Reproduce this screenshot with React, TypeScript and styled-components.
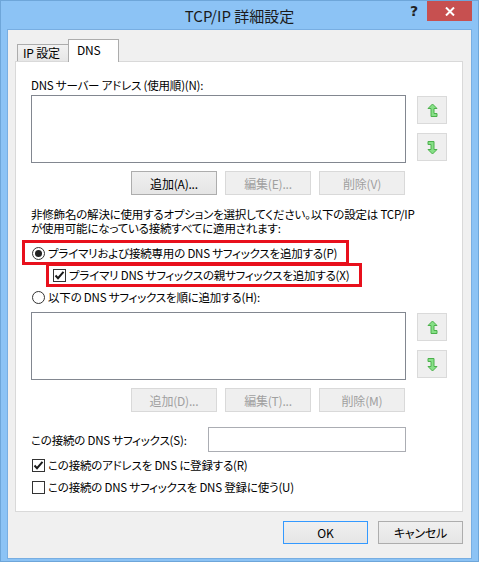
import React from 'react';
import styled, { createGlobalStyle } from 'styled-components';

const GlobalStyle = createGlobalStyle`
  html, body {
    margin: 0;
    padding: 0;
  }
  body {
    font-family: "Noto Sans CJK JP", "Noto Sans", sans-serif;
    font-size: 11.5px;
    letter-spacing: -0.2px;
    color: #000;
    font-feature-settings: "palt";
  }
`;

const Window = styled.div`
  width: 479px;
  height: 562px;
  box-sizing: border-box;
  border: 1px solid #6ea6d9;
  background: #8cc3f5;
  display: flex;
  flex-direction: column;
`;

const TitleBar = styled.div`
  height: 29px;
  display: grid;
  grid-template-columns: 1fr auto 1fr;
  align-items: start;
`;

const Title = styled.div`
  grid-column: 2;
  font-size: 15px;
  letter-spacing: 0;
  line-height: 29px;
  color: #1b1b1b;
  font-feature-settings: normal;
`;

const Caption = styled.div`
  grid-column: 3;
  justify-self: end;
  display: flex;
  margin-right: 6px;
`;

const HelpButton = styled.div`
  width: 26px;
  height: 20px;
  font-family: "DejaVu Sans", sans-serif;
  font-weight: bold;
  font-size: 14px;
  line-height: 20px;
  text-align: center;
  color: #222;
`;

const CloseButton = styled.div`
  width: 45px;
  height: 20px;
  background: #c75050;
  display: flex;
  align-items: center;
  justify-content: center;
`;

const Client = styled.div`
  flex: 1;
  margin: 0 7px 3px;
  background: #f0f0f0;
  box-shadow: 0 0 0 1px #78aee2;
  padding: 9px 8px 0 7px;
  display: flex;
  flex-direction: column;
`;

const TabStrip = styled.div`
  height: 23px;
  margin: 0 0 -1px 2px;
  display: flex;
  align-items: flex-end;
  position: relative;
  z-index: 1;
`;

const Tab = styled.div<{ $active?: boolean }>`
  box-sizing: border-box;
  width: 51px;
  height: ${(p) => (p.$active ? '23px' : '17px')};
  margin-bottom: ${(p) => (p.$active ? '0' : '1px')};
  padding: ${(p) => (p.$active ? '0 0 3px 8px' : '0 0 0 5px')};
  border: 1px solid #acacac;
  border-bottom: none;
  border-right: ${(p) => (p.$active ? '1px solid #acacac' : 'none')};
  background: ${(p) => (p.$active ? '#fff' : 'linear-gradient(#f2f2f2, #e6e6e6)')};
  display: flex;
  align-items: center;
  line-height: 14px;
  font-size: 12px;
`;

const Panel = styled.div`
  flex: 1;
  background: #fff;
  border: 1px solid #d9d9d9;
  padding: 16px 15px 0 15px;
  display: flex;
  flex-direction: column;
`;

const FieldLabel = styled.div`
  line-height: 14px;
  margin-bottom: 3px;
  white-space: nowrap;
`;

const ListRow = styled.div<{ $gap?: number }>`
  display: flex;
  gap: 11px;
  margin-top: ${(p) => p.$gap || 0}px;
`;

const ListBox = styled.div`
  width: 375px;
  height: 68px;
  box-sizing: border-box;
  border: 1px solid #828790;
  background: #fff;
`;

const ArrowColumn = styled.div`
  display: flex;
  flex-direction: column;
  gap: 9px;
  padding-top: 1px;
`;

const ArrowButton = styled.div`
  width: 30px;
  height: 28px;
  box-sizing: border-box;
  border: 1px solid #dadada;
  background: #efefef;
  display: flex;
  align-items: center;
  justify-content: center;
`;

const ButtonRow = styled.div`
  width: 375px;
  display: flex;
  justify-content: flex-end;
  gap: 8px;
  padding-right: 1px;
  box-sizing: border-box;
  margin-top: 8px;
`;

const PushButton = styled.div<{ $disabled?: boolean; $default?: boolean }>`
  width: 86px;
  height: 24px;
  box-sizing: border-box;
  border: 1px solid
    ${(p) => (p.$default ? '#3399ff' : p.$disabled ? '#d9d9d9' : '#adadad')};
  background: ${(p) =>
    p.$disabled ? '#efefef' : 'linear-gradient(#f0f0f0, #e5e5e5)'};
  color: ${(p) => (p.$disabled ? '#a0a0a0' : '#000')};
  display: flex;
  align-items: center;
  justify-content: center;
  white-space: nowrap;
  font-size: 12px;
`;

const Description = styled.div`
  margin-top: 12px;
  line-height: 14px;
  white-space: nowrap;
`;

const OptionGroup = styled.div`
  margin-top: 7px;
  display: flex;
  flex-direction: column;
`;

const OptionRow = styled.label<{ $indent?: number; $mark?: string }>`
  position: relative;
  width: fit-content;
  height: 22px;
  margin-left: ${(p) => p.$indent || 0}px;
  display: flex;
  align-items: center;
  gap: 3px;
  white-space: nowrap;

  &::after {
    content: '';
    display: ${(p) => (p.$mark ? 'block' : 'none')};
    position: absolute;
    inset: ${(p) => p.$mark || '0'};
    border: 3px solid #e8101c;
    pointer-events: none;
  }
`;

const Radio = styled.span<{ $checked?: boolean }>`
  width: 13px;
  height: 13px;
  margin-left: 1px;
  box-sizing: border-box;
  border: 1px solid #333;
  border-radius: 50%;
  background: #fff;
  display: flex;
  align-items: center;
  justify-content: center;

  &::before {
    content: '';
    width: 7px;
    height: 7px;
    border-radius: 50%;
    background: ${(p) => (p.$checked ? '#222' : 'transparent')};
  }
`;

const Box = styled.span`
  width: 13px;
  height: 13px;
  margin-left: 1px;
  box-sizing: border-box;
  border: 1px solid #333;
  background: #fff;
  display: flex;
  align-items: center;
  justify-content: center;
`;

const SuffixRow = styled.div`
  margin-top: 15px;
  display: flex;
  align-items: center;
`;

const SuffixLabel = styled.div`
  width: 177px;
  white-space: nowrap;
`;

const TextInput = styled.div`
  width: 198px;
  height: 25px;
  box-sizing: border-box;
  border: 1px solid #abadb3;
  background: #fff;
`;

const CheckGroup = styled.div`
  margin-top: 2px;
  display: flex;
  flex-direction: column;
`;

const Footer = styled.div`
  display: flex;
  justify-content: flex-end;
  gap: 10px;
  padding: 9px 0 14px;
`;

const FooterButton = styled(PushButton)`
  width: 85px;
  height: 23px;
`;

const UpIcon = () => (
  <svg width="11" height="15" viewBox="0 0 11 15">
    <path
      d="M5.5 1 L10 5.5 L7 5.5 L7 10.5 L10 10.5 L10 13.5 L4 13.5 L4 5.5 L1 5.5 Z"
      fill="#86e086"
      stroke="#4cb04c"
      strokeWidth="1"
    />
  </svg>
);

const DownIcon = () => (
  <svg width="11" height="15" viewBox="0 0 11 15">
    <path
      d="M1 1.5 L7 1.5 L7 9.5 L10 9.5 L5.5 14 L1 9.5 L4 9.5 L4 4.5 L1 4.5 Z"
      fill="#86e086"
      stroke="#4cb04c"
      strokeWidth="1"
    />
  </svg>
);

const Check: React.FC<{ checked?: boolean }> = ({ checked }) => (
  <Box>
    {checked && (
      <svg width="11" height="11" viewBox="0 0 11 11">
        <path d="M1.5 5.5 L4 8.2 L9.5 1.8" fill="none" stroke="#1a1a1a" strokeWidth="2" />
      </svg>
    )}
  </Box>
);

const ListWithArrows: React.FC<{ gap?: number }> = ({ gap }) => (
  <ListRow $gap={gap}>
    <ListBox />
    <ArrowColumn>
      <ArrowButton>
        <UpIcon />
      </ArrowButton>
      <ArrowButton>
        <DownIcon />
      </ArrowButton>
    </ArrowColumn>
  </ListRow>
);

const App: React.FC = () => {
  return (
    <>
      <GlobalStyle />
      <Window>
        <TitleBar>
          <Title>TCP/IP 詳細設定</Title>
          <Caption>
            <HelpButton>?</HelpButton>
            <CloseButton>
              <svg width="10" height="9" viewBox="0 0 10 9">
                <path d="M1 0.5 L9 8.5 M9 0.5 L1 8.5" stroke="#fff" strokeWidth="2" />
              </svg>
            </CloseButton>
          </Caption>
        </TitleBar>
        <Client>
          <TabStrip>
            <Tab>IP 設定</Tab>
            <Tab $active>DNS</Tab>
          </TabStrip>
          <Panel>
            <FieldLabel>DNS サーバー アドレス (使用順)(N):</FieldLabel>
            <ListWithArrows />
            <ButtonRow>
              <PushButton>追加(A)...</PushButton>
              <PushButton $disabled>編集(E)...</PushButton>
              <PushButton $disabled>削除(V)</PushButton>
            </ButtonRow>

            <Description>
              非修飾名の解決に使用するオプションを選択してください。以下の設定は TCP/IP
              <br />
              が使用可能になっている接続すべてに適用されます:
            </Description>

            <OptionGroup>
              <OptionRow $mark="-2px -12px -1px -9px">
                <Radio $checked />
                プライマリおよび接続専用の DNS サフィックスを追加する(P)
              </OptionRow>
              <OptionRow $indent={21} $mark="-1px -13px -1px -6px">
                <Check checked />
                プライマリ DNS サフィックスの親サフィックスを追加する(X)
              </OptionRow>
              <OptionRow>
                <Radio />
                以下の DNS サフィックスを順に追加する(H):
              </OptionRow>
            </OptionGroup>

            <ListWithArrows gap={4} />
            <ButtonRow>
              <PushButton $disabled>追加(D)...</PushButton>
              <PushButton $disabled>編集(T)...</PushButton>
              <PushButton $disabled>削除(M)</PushButton>
            </ButtonRow>

            <SuffixRow>
              <SuffixLabel>この接続の DNS サフィックス(S):</SuffixLabel>
              <TextInput />
            </SuffixRow>

            <CheckGroup>
              <OptionRow>
                <Check checked />
                この接続のアドレスを DNS に登録する(R)
              </OptionRow>
              <OptionRow>
                <Check />
                この接続の DNS サフィックスを DNS 登録に使う(U)
              </OptionRow>
            </CheckGroup>
          </Panel>
          <Footer>
            <FooterButton $default>OK</FooterButton>
            <FooterButton>キャンセル</FooterButton>
          </Footer>
        </Client>
      </Window>
    </>
  );
};

export default App;
